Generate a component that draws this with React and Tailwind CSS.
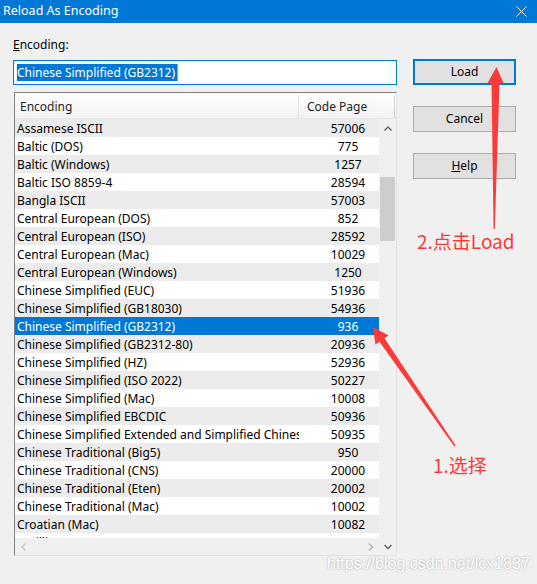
import React from "react";

const rows = [
  ["Assamese ISCII", "57006"],
  ["Baltic (DOS)", "775"],
  ["Baltic (Windows)", "1257"],
  ["Baltic ISO 8859-4", "28594"],
  ["Bangla ISCII", "57003"],
  ["Central European (DOS)", "852"],
  ["Central European (ISO)", "28592"],
  ["Central European (Mac)", "10029"],
  ["Central European (Windows)", "1250"],
  ["Chinese Simplified (EUC)", "51936"],
  ["Chinese Simplified (GB18030)", "54936"],
  ["Chinese Simplified (GB2312)", "936"],
  ["Chinese Simplified (GB2312-80)", "20936"],
  ["Chinese Simplified (HZ)", "52936"],
  ["Chinese Simplified (ISO 2022)", "50227"],
  ["Chinese Simplified (Mac)", "10008"],
  ["Chinese Simplified EBCDIC", "50936"],
  ["Chinese Simplified Extended and Simplified Chinese", "50935"],
  ["Chinese Traditional (Big5)", "950"],
  ["Chinese Traditional (CNS)", "20000"],
  ["Chinese Traditional (Eten)", "20002"],
  ["Chinese Traditional (Mac)", "10002"],
  ["Croatian (Mac)", "10082"],
  ["Cyrillic (DOS)", "866"],
];

function Chevron({ dir, color }) {
  const d = {
    up: "M0.5 4.5L4 1L7.5 4.5",
    down: "M0.5 1L4 4.5L7.5 1",
    left: "M4.5 0.5L1 4L4.5 7.5",
    right: "M1 0.5L4.5 4L1 7.5",
  }[dir];
  const vertical = dir === "up" || dir === "down";
  return (
    <svg
      width={vertical ? 8 : 6}
      height={vertical ? 6 : 8}
      viewBox={vertical ? "0 0 8 6" : "0 0 6 8"}
    >
      <path d={d} fill="none" stroke={color} strokeWidth="1.4" />
    </svg>
  );
}

export default function App() {
  return (
    <div className="relative h-[584px] w-[537px] overflow-hidden bg-[#f0f0f0] font-['Segoe_UI','Noto_Sans','Noto_Sans_CJK_SC',sans-serif] text-[12px] text-black">
      {/* Title bar */}
      <div className="flex h-[23px] items-center justify-between bg-[#0078d7] pl-[3px] pr-[10px] text-[12.5px] text-white">
        <span>Reload As Encoding</span>
        <svg width="11" height="11" viewBox="0 0 11 11">
          <path d="M0.5 0.5L10.5 10.5M10.5 0.5L0.5 10.5" stroke="white" strokeWidth="1" />
        </svg>
      </div>

      <div className="flex pl-[13px] pt-[13px]">
        {/* Left column */}
        <div className="flex w-[384px] flex-col">
          <div className="h-[16px] pt-px leading-[16px]">
            <span className="underline">E</span>ncoding:
          </div>
          <div className="mt-[8px] flex h-[25px] items-center border border-[#0078d7] bg-white pl-[3px]">
            <span className="h-[17px] bg-[#0078d7] pr-[2px] leading-[17px] text-white">Chinese Simplified (GB2312)</span>
            <span className="h-[17px] w-px bg-[#ff8a1c]" />
          </div>

          {/* List view */}
          <div className="ml-px mt-[7px] flex h-[464px] flex-col border border-b-[#e3e3e3] border-l-[#828282] border-r-[#e3e3e3] border-t-[#828282] bg-white">
            {/* Header */}
            <div className="flex h-[26px] border-b border-[#e5e5e5] bg-gradient-to-b from-white to-[#f2f2f2] pt-[2px] text-[#1e1e1e]">
              <div className="flex w-[284px] items-center border-r border-[#e5e5e5] pl-[5px]">Encoding</div>
              <div className="flex w-[96px] items-center border-r border-[#d0d0d0] pl-[8px]">Code Page</div>
            </div>
            {/* Body */}
            <div className="flex min-h-0 flex-1">
              <div className="flex w-[364px] flex-col">
                <div className="h-[419px] overflow-hidden">
                  {rows.map(([name, cp], i) => {
                    const selected = i === 11;
                    const bg = selected
                      ? "bg-[#0078d7] text-white"
                      : i % 2 === 0
                      ? "bg-[#ececec]"
                      : "bg-white";
                    return (
                      <div key={name} className={`flex h-[18px] overflow-hidden pt-px leading-[18px] ${bg}`}>
                        <div className="w-[284px] overflow-hidden whitespace-nowrap pl-[2px]">{name}</div>
                        <div className="w-[80px] pl-[18px] text-center">{cp}</div>
                      </div>
                    );
                  })}
                </div>
                <div className="flex h-[17px] items-center justify-between bg-[#f0f0f0]">
                  <div className="flex w-[17px] justify-center">
                    <Chevron dir="left" color="#c4c4c4" />
                  </div>
                  <div className="flex w-[17px] justify-center">
                    <Chevron dir="right" color="#b4b4b4" />
                  </div>
                </div>
              </div>
              {/* Vertical scrollbar */}
              <div className="flex w-[17px] flex-col bg-[#f0f0f0]">
                <div className="flex h-[17px] items-center justify-center pt-[2px]">
                  <Chevron dir="up" color="#606060" />
                </div>
                <div className="mx-px mt-[41px] h-[64px] bg-[#cdcdcd]" />
                <div className="flex-1" />
                <div className="flex h-[17px] items-center justify-center">
                  <Chevron dir="down" color="#606060" />
                </div>
              </div>
            </div>
          </div>
        </div>

        {/* Buttons */}
        <div className="ml-[16px] flex w-[103px] flex-col gap-[21px] pt-[23px]">
          <div className="flex h-[26px] items-center justify-center border-2 border-[#0078d7] bg-[#e1e1e1]">Load</div>
          <div className="flex h-[26px] items-center justify-center border border-[#adadad] bg-[#e1e1e1]">Cancel</div>
          <div className="flex h-[26px] items-center justify-center border border-[#adadad] bg-[#e1e1e1]">
            <span className="underline">H</span>elp
          </div>
        </div>
      </div>

      {/* Annotations */}
      <svg className="pointer-events-none absolute left-0 top-0" width="537" height="584" viewBox="0 0 537 584">
        <polygon
          points="496.5,67 504,84 499.5,82.5 494.8,229 493.6,229 491.5,82.5 487,84"
          fill="#fb3a3a"
        />
        <polygon
          points="373,327 388.6,335.5 384.5,338.3 455.6,445.6 454.4,446.4 379.5,341.7 375.4,344.5"
          fill="#fb3a3a"
        />
      </svg>
      <span className="absolute left-[417px] top-[231px] font-['Noto_Sans_CJK_SC','Noto_Sans',sans-serif] text-[19px] leading-[19px] text-[#fb3a3a]">
        2.点击Load
      </span>
      <span className="absolute left-[433px] top-[455px] font-['Noto_Sans_CJK_SC','Noto_Sans',sans-serif] text-[19px] leading-[19px] text-[#fb3a3a]">
        1.选择
      </span>
      <span className="absolute left-[327px] top-[555px] font-['Liberation_Sans',Arial,sans-serif] text-[16px] leading-[18px] text-white [text-shadow:0_0_2px_rgba(0,0,0,0.35)]">
        https://blog.csdn.net/lcx1837
      </span>
    </div>
  );
}
